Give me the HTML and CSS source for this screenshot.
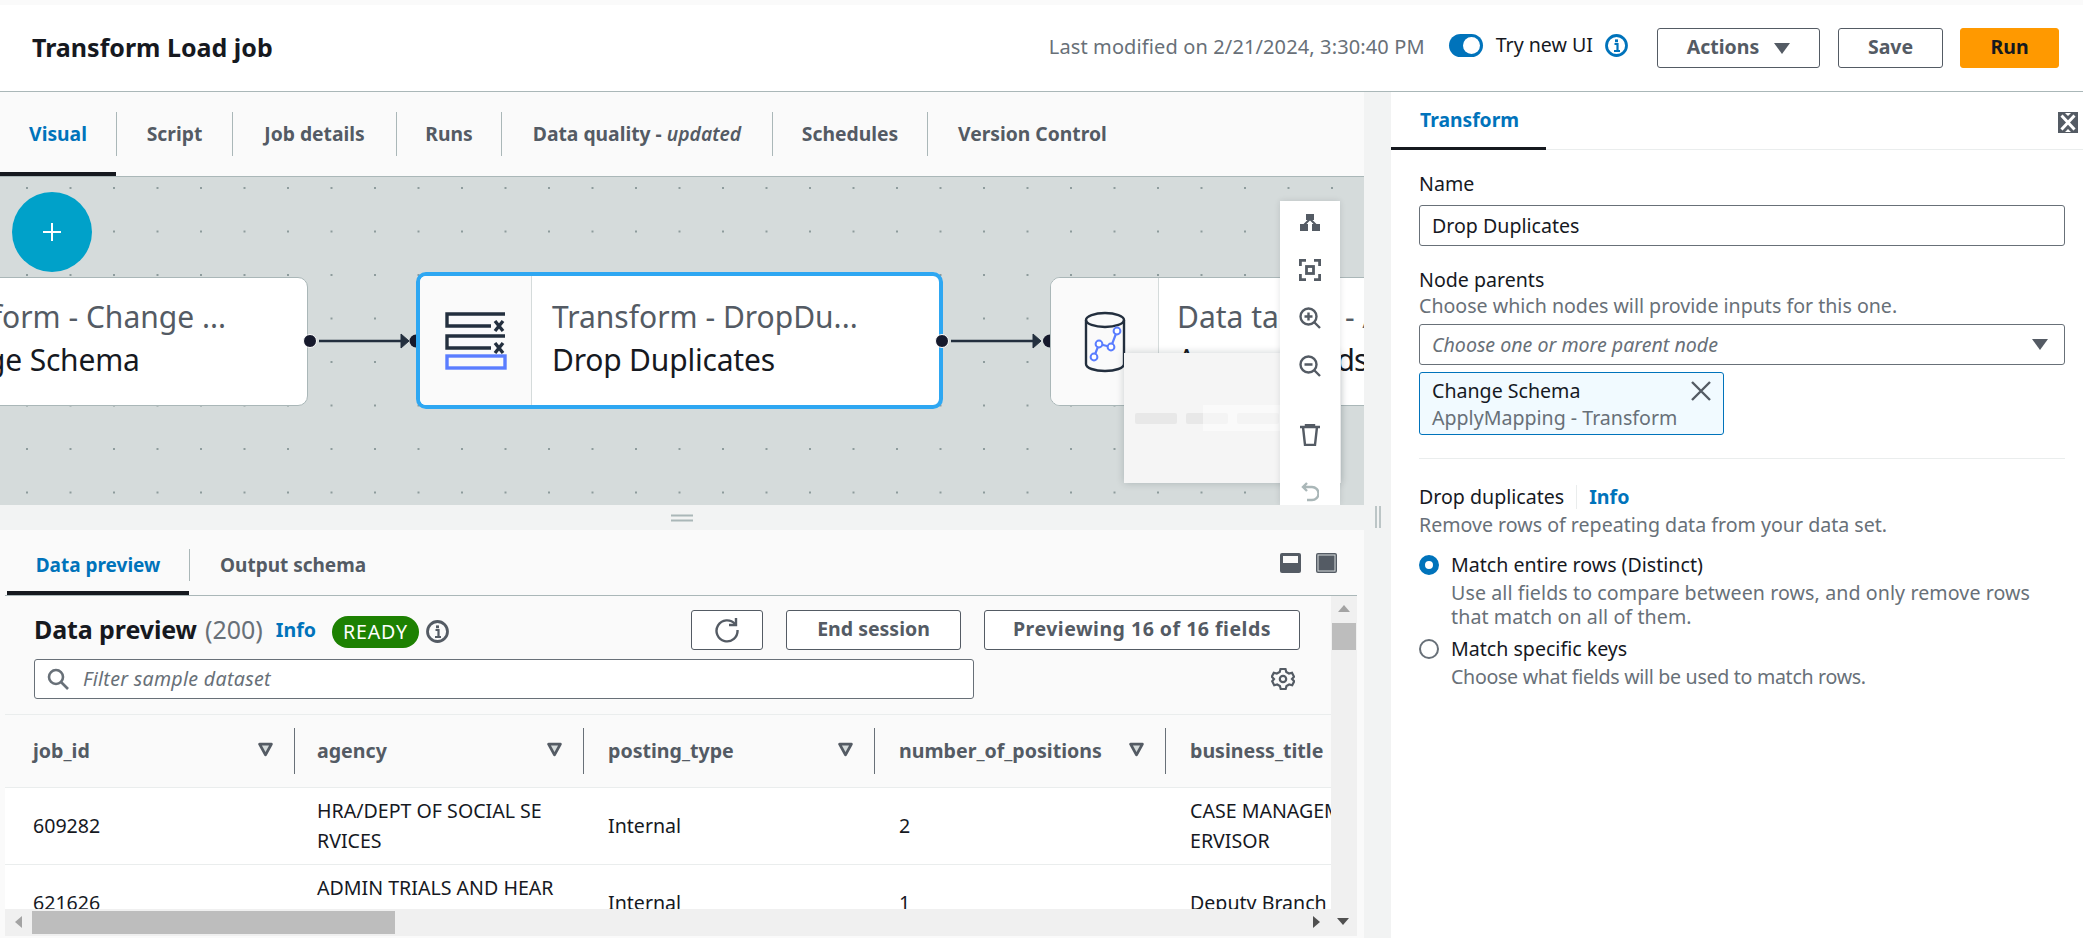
FILE: index.html
```html
<!DOCTYPE html>
<html lang="en">
<head>
    <meta charset="UTF-8">
    <meta name="viewport" content="width=device-width, initial-scale=1.0">
    <title>Transform Load job</title>
    <link rel="stylesheet" href="styles.css">
</head>
<body>
    <svg class="defs" width="0" height="0">
        <symbol id="sort" viewBox="0 0 14 14"><path d="M1.5 2h11L7 12z" fill="#d5dbdb" stroke="#545b64" stroke-width="2.600" stroke-linejoin="round"/></symbol>
        <symbol id="info" viewBox="0 0 23 23"><circle cx="11.5" cy="11.5" r="10" fill="none" stroke="currentColor" stroke-width="2.8"/><path d="M9.500 10h3v7M9 17h6" fill="none" stroke="currentColor" stroke-width="2.200"/><rect x="10" y="5.400" width="3" height="2.800" fill="currentColor"/></symbol>
    </svg>

    <header class="top-bar">
        <h1>Transform Load job</h1>
        <div class="top-actions">
            <span class="modified">Last modified on 2/21/2024, 3:30:40 PM</span>
            <span class="toggle"><span class="knob"></span></span>
            <span class="try-ui">Try new UI</span>
            <svg class="info-ic blue"><use href="#info"/></svg>
            <button class="btn btn-actions">Actions <span class="caret"></span></button>
            <button class="btn btn-save">Save</button>
            <button class="btn btn-run">Run</button>
        </div>
    </header>

    <main class="workspace">
        <section class="left-col">
            <nav class="tabs job-tabs">
                <a class="tab active">Visual</a>
                <a class="tab">Script</a>
                <a class="tab">Job details</a>
                <a class="tab">Runs</a>
                <a class="tab">Data quality - <em>updated</em></a>
                <a class="tab">Schedules</a>
                <a class="tab last">Version Control</a>
            </nav>

            <div class="canvas">
                <button class="add-node"><svg width="22" height="22" viewBox="0 0 22 22"><path d="M11 2v18M2 11h18" stroke="#fff" stroke-width="2"/></svg></button>

                <div class="node node-one">
                    <div class="node-icon"></div>
                    <div class="node-text">
                        <div class="node-type">Transform - Change ...</div>
                        <div class="node-name">Change Schema</div>
                    </div>
                </div>

                <div class="node node-two">
                    <div class="node-icon">
                        <svg width="62" height="58" viewBox="0 0 62 58" fill="none">
                            <path d="M60 2H2v12h44" stroke="#232f3e" stroke-width="3.400"/>
                            <path d="M50 9l8 10M58 9l-8 10" stroke="#232f3e" stroke-width="3.400"/>
                            <path d="M60 24H2v12h44" stroke="#232f3e" stroke-width="3.400"/>
                            <path d="M50 31l8 10M58 31l-8 10" stroke="#232f3e" stroke-width="3.400"/>
                            <rect x="2" y="44" width="58" height="12" stroke="#5a7dff" stroke-width="3.400"/>
                        </svg>
                    </div>
                    <div class="node-text">
                        <div class="node-type">Transform - DropDu...</div>
                        <div class="node-name">Drop Duplicates</div>
                    </div>
                </div>

                <div class="node node-three">
                    <div class="node-icon">
                        <svg width="42" height="62" viewBox="0 0 42 62" fill="none">
                            <ellipse cx="21" cy="9" rx="19" ry="7" stroke="#232f3e" stroke-width="2.400"/>
                            <path d="M2 9v44c0 4 8.500 7 19 7s19-3 19-7V9" stroke="#232f3e" stroke-width="2.400"/>
                            <path d="M10 46l5-13 12 3 6-16" stroke="#5a7dff" stroke-width="2.200"/>
                            <circle cx="10" cy="46" r="3.400" fill="#fff" stroke="#5a7dff" stroke-width="2"/>
                            <circle cx="15" cy="33" r="3.400" fill="#fff" stroke="#5a7dff" stroke-width="2"/>
                            <circle cx="27" cy="36" r="3.400" fill="#fff" stroke="#5a7dff" stroke-width="2"/>
                            <circle cx="33" cy="20" r="3.400" fill="#fff" stroke="#5a7dff" stroke-width="2"/>
                        </svg>
                    </div>
                    <div class="node-text">
                        <div class="node-type">Data target - Amazon S3</div>
                        <div class="node-name">Amazon Fields</div>
                    </div>
                </div>

                <svg class="edges" width="1364" height="328" viewBox="0 0 1364 328">
                    <g fill="#16192c" stroke="#fff" stroke-width="1">
                        <circle cx="310" cy="164" r="6.500"/>
                        <circle cx="942" cy="164" r="6.500"/>
                    </g>
                    <g fill="#16192c">
                        <path d="M416 157.500a6.500 6.500 0 0 0 0 13z"/>
                        <path d="M1050 157.500a7 6.500 0 0 0 0 13z"/>
                    </g>
                    <g fill="#232f3e" stroke="#232f3e">
                        <path d="M319 164h82" stroke-width="2.500"/>
                        <path d="M401 157l8 7-8 7z"/>
                        <path d="M951 164h82" stroke-width="2.500"/>
                        <path d="M1033 157l8 7-8 7z"/>
                    </g>
                </svg>

                <div class="loading-pop">
                    <span class="bone"></span><span class="bone"></span><span class="bone"></span>
                    <span class="shimmer"></span>
                </div>

                <div class="canvas-tools">
                    <svg class="tool-first" width="20" height="17" viewBox="0 0 20 17"><path d="M6 0h8v6H6zM0 10h8v7H0zM12 10h8v7h-8z" fill="#545b64"/><path d="M10 5L4 11M10 5l6 6" stroke="#545b64" stroke-width="2"/></svg>
                    <svg width="22" height="22" viewBox="0 0 22 22" fill="none" stroke="#545b64" stroke-width="2.800"><path d="M1.400 7V1.400H7M15 1.400h5.600V7M20.600 15v5.600H15M7 20.600H1.400V15"/><rect x="7.500" y="7.500" width="7" height="7"/></svg>
                    <svg width="22" height="22" viewBox="0 0 22 22" fill="none" stroke="#545b64" stroke-width="2.400"><circle cx="9.500" cy="9.500" r="8"/><path d="M15 15l6 6M5.500 9.500h8M9.500 5.500v8"/></svg>
                    <svg width="22" height="22" viewBox="0 0 22 22" fill="none" stroke="#545b64" stroke-width="2.400"><circle cx="9.500" cy="9.500" r="8"/><path d="M15 15l6 6M5.500 9.500h8"/></svg>
                    <svg class="tool-gap" width="20" height="22" viewBox="0 0 20 22" fill="none" stroke="#545b64" stroke-width="2.400"><path d="M0 3h20M3 3l2 18h10l2-18M6 3V1h8v2"/></svg>
                    <svg width="18" height="20" viewBox="0 0 18 20" fill="none" stroke="#aab7b8" stroke-width="2.400"><path d="M6 1L2 5l4 4M2 5h9a6 6 0 0 1 0 13H6"/></svg>
                </div>
            </div>

            <div class="drag-bar">
                <svg width="22" height="8" viewBox="0 0 22 8"><path d="M0 1.500h22M0 6.500h22" stroke="#aab7b8" stroke-width="2"/></svg>
            </div>

            <section class="preview">
                <div class="tabs preview-tabs">
                    <a class="tab active">Data preview</a>
                    <a class="tab last">Output schema</a>
                    <div class="split-icons">
                        <svg width="21" height="20" viewBox="0 0 21 20"><rect width="21" height="20" rx="2" fill="#545b64"/><rect x="3" y="3" width="15" height="7" fill="#fafafa"/></svg>
                        <svg width="21" height="20" viewBox="0 0 21 20"><rect width="21" height="20" rx="2" fill="#545b64"/><rect x="2" y="2" width="17" height="16" fill="none" stroke="#d5dbdb"/></svg>
                    </div>
                </div>

                <div class="preview-body">
                    <div class="preview-main">
                        <div class="preview-head">
                            <h2>Data preview</h2>
                            <span class="count">(200)</span>
                            <a class="info-link">Info</a>
                            <span class="pill">READY</span>
                            <svg class="info-ic grey"><use href="#info"/></svg>
                            <div class="head-buttons">
                                <button class="btn btn-refresh"><svg width="26" height="26" viewBox="0 0 26 26" fill="none" stroke="#545b64" stroke-width="2.400"><path d="M21 7a10.500 10.500 0 1 0 2.500 6"/><path d="M22 1v7h-7"/></svg></button>
                                <button class="btn btn-end">End session</button>
                                <button class="btn btn-fields">Previewing 16 of 16 fields</button>
                            </div>
                        </div>
                        <div class="filter-row">
                            <div class="filter-input">
                                <svg width="22" height="22" viewBox="0 0 22 22" fill="none" stroke="#687078" stroke-width="2.600"><circle cx="9" cy="9" r="7"/><path d="M14 14l7 7"/></svg>
                                <span>Filter sample dataset</span>
                            </div>
                            <svg class="gear" width="24" height="24" viewBox="0 0 24 24" fill="none" stroke="#545b64" stroke-width="2.200"><path d="M9.500 2h5l.8 3 2.700 1.500 3-.8 2 4L21 12l2.200 2.300-2 4-3-.8-2.700 1.500-.8 3h-5l-.8-3-2.700-1.500-3 .8-2-4L3 12 .8 9.700l2-4 3 .8L8.700 5z"/><circle cx="12" cy="12" r="3.200"/></svg>
                        </div>

                        <div class="table-wrap">
                            <table class="data-table">
                                <thead>
                                    <tr>
                                        <th><div class="th-in"><span>job_id</span><svg><use href="#sort"/></svg></div></th>
                                        <th><div class="th-in"><span>agency</span><svg><use href="#sort"/></svg></div></th>
                                        <th><div class="th-in"><span>posting_type</span><svg><use href="#sort"/></svg></div></th>
                                        <th><div class="th-in"><span>number_of_positions</span><svg><use href="#sort"/></svg></div></th>
                                        <th><div class="th-in"><span>business_title</span></div></th>
                                    </tr>
                                </thead>
                                <tbody>
                                    <tr>
                                        <td>609282</td>
                                        <td>HRA/DEPT OF SOCIAL SE<br>RVICES</td>
                                        <td>Internal</td>
                                        <td>2</td>
                                        <td>CASE MANAGEMENT SUP<br>ERVISOR</td>
                                    </tr>
                                    <tr>
                                        <td>621626</td>
                                        <td>ADMIN TRIALS AND HEAR<br>INGS</td>
                                        <td>Internal</td>
                                        <td>1</td>
                                        <td>Deputy Branch</td>
                                    </tr>
                                </tbody>
                            </table>
                        </div>
                    </div>
                    <div class="v-scroll">
                        <span class="arrow up"></span>
                        <span class="v-thumb"></span>
                    </div>
                </div>

                <div class="h-scroll">
                    <span class="arrow left"></span>
                    <span class="h-thumb"></span>
                    <span class="arrow right"></span>
                    <span class="arrow down"></span>
                </div>
            </section>
        </section>

        <div class="side-gutter">
            <svg width="6" height="22" viewBox="0 0 6 22"><path d="M1 0v22M5 0v22" stroke="#aab7b8" stroke-width="1.500"/></svg>
        </div>

        <aside class="side-panel">
            <div class="side-tabs">
                <a class="side-tab">Transform</a>
                <svg class="expand" width="20" height="21" viewBox="0 0 20 21"><path d="M0 0h20v21H0z" fill="#545b64"/><path d="M3 3l14 15M17 3L3 18" stroke="#fff" stroke-width="3"/><path d="M0 0h7L0 7zM20 0h-7l7 7zM0 21h7l-7-7zM20 21h-7l7-7z" fill="#545b64"/><path d="M7 1h6l-3 3zM7 20h6l-3-3z" fill="#fff"/></svg>
            </div>
            <div class="side-body">
                <label class="field-label first">Name</label>
                <div class="text-input">Drop Duplicates</div>

                <label class="field-label">Node parents</label>
                <p class="hint">Choose which nodes will provide inputs for this one.</p>
                <div class="text-input select"><i>Choose one or more parent node</i><span class="caret"></span></div>
                <div class="token">
                    <div class="token-head">
                        <span>Change Schema</span>
                        <svg width="20" height="20" viewBox="0 0 20 20"><path d="M1 1l18 18M19 1L1 19" stroke="#545b64" stroke-width="2.400"/></svg>
                    </div>
                    <div class="token-sub">ApplyMapping - Transform</div>
                </div>

                <hr class="divider">

                <div class="group-label"><span>Drop duplicates</span><a class="info-link">Info</a></div>
                <p class="hint hint-group">Remove rows of repeating data from your data set.</p>

                <div class="radio-row checked">
                    <span class="radio"></span>
                    <div>
                        <div class="radio-label">Match entire rows (Distinct)</div>
                        <div class="radio-desc spaced">Use all fields to compare between rows, and only remove rows that match on all of them.</div>
                    </div>
                </div>
                <div class="radio-row">
                    <span class="radio"></span>
                    <div>
                        <div class="radio-label">Match specific keys</div>
                        <div class="radio-desc">Choose what fields will be used to match rows.</div>
                    </div>
                </div>
            </div>
        </aside>
    </main>
</body>
</html>
```
FILE: styles.css
```css
* {
    box-sizing: border-box;
}

body {
    margin: 0;
    width: 2083px;
    height: 938px;
    overflow: hidden;
    padding-top: 5px;
    background-color: #fafafa;
    color: #16191f;
    font-family: "Noto Sans", Arial, sans-serif;
    font-size: 19.6px;
    line-height: 24px;
}

.defs {
    position: absolute;
}

button {
    font-family: inherit;
}

/* top bar */
.top-bar {
    display: flex;
    justify-content: space-between;
    align-items: center;
    height: 87px;
    padding: 0 24px 0 32px;
    background-color: #fff;
    border-bottom: 1px solid #aab7b8;
}

h1 {
    margin: 0 0 2px;
    font-size: 25px;
    font-weight: 700;
}

.top-actions {
    display: flex;
    align-items: center;
}

.modified {
    margin: -2px 24px 0 0;
    color: #687078;
    font-size: 20px;
    letter-spacing: 0.12px;
}

.toggle {
    display: flex;
    justify-content: flex-end;
    align-items: center;
    width: 34px;
    height: 23px;
    margin: -6px 13px 0 0;
    padding-right: 3px;
    border-radius: 12px;
    background-color: #0073bb;
}

.knob {
    width: 17px;
    height: 17px;
    border-radius: 50%;
    background-color: #fff;
}

.try-ui {
    margin: -7px 12px 0 0;
}

.info-ic {
    width: 23px;
    height: 23px;
}

.info-ic.blue {
    margin: -6px 29px 0 0;
    color: #0073bb;
}

.info-ic.grey {
    color: #545b64;
}

.btn {
    height: 40px;
    padding: 0 0 3px;
    background-color: #fff;
    border: 1px solid #545b64;
    border-radius: 3px;
    color: #545b64;
    font-size: 19.5px;
    font-weight: 700;
}

.btn-actions {
    width: 163px;
    margin-right: 18px;
}

.caret {
    display: inline-block;
    width: 0;
    height: 0;
    border-left: 8px solid transparent;
    border-right: 8px solid transparent;
    border-top: 11px solid #545b64;
}

.btn-actions .caret {
    margin-left: 10px;
}

.btn-save {
    width: 105px;
    margin-right: 17px;
}

.btn-run {
    width: 99px;
    background-color: #ff9900;
    border-color: #ff9900;
    color: #16191f;
}

/* layout */
.workspace {
    display: flex;
    height: 846px;
}

.left-col {
    display: flex;
    flex-direction: column;
    width: 1364px;
}

.side-gutter {
    display: flex;
    justify-content: center;
    width: 27px;
    padding-top: 414px;
    background-color: #f2f3f3;
}

.side-panel {
    flex: 1;
    background-color: #fff;
}

/* tabs */
.tabs {
    background-color: #fafafa;
    border-bottom: 1px solid #aab7b8;
}

.job-tabs {
    display: grid;
    grid-template-columns: 117px 116px 164px 105px 271px 155px auto;
    align-items: center;
    height: 85px;
}

.tab {
    position: relative;
    display: flex;
    align-items: center;
    justify-content: center;
    height: 44px;
    border-right: 1px solid #aab7b8;
    color: #545b64;
    font-size: 19.3px;
    font-weight: 700;
    white-space: pre;
}

.tab.last {
    justify-content: flex-start;
    padding-left: 30px;
    border-right: none;
}

.tab.active {
    color: #0073bb;
}

.tab.active::after {
    content: "";
    position: absolute;
    left: 0;
    right: 0;
    bottom: -20px;
    height: 4px;
    background-color: #16191f;
}

.tab em {
    font-weight: 600;
}

/* canvas */
.canvas {
    position: relative;
    height: 328px;
    overflow: hidden;
    background-color: #d5dbdb;
    background-image: radial-gradient(circle, #8d9b9c 0.8px, transparent 1.2px);
    background-size: 43.5px 43.5px;
    background-position: 5.25px -10.75px;
}

.add-node {
    position: absolute;
    left: 12px;
    top: 15px;
    display: flex;
    justify-content: center;
    align-items: center;
    width: 80px;
    height: 80px;
    padding: 0;
    border: none;
    border-radius: 50%;
    background-color: #00a1c9;
}

.node {
    position: absolute;
    display: flex;
    top: 100px;
    height: 129px;
    width: 525px;
    background-color: #fff;
    border: 1px solid #aab7b8;
    border-radius: 10px;
    overflow: hidden;
}

.node-one {
    left: -217px;
}

.node-two {
    left: 416px;
    top: 95px;
    width: 527px;
    height: 137px;
    border: 4px solid #2ea7f2;
}

.node-three {
    left: 1050px;
    width: 600px;
}

.node-icon {
    display: flex;
    flex: none;
    justify-content: center;
    align-items: center;
    width: 112px;
    background-color: #fafafa;
    border-right: 1px solid #d5dbdb;
}

.node-three .node-icon {
    width: 108px;
}

.node-text {
    padding: 17px 0 0 19px;
    font-size: 30px;
    line-height: 43px;
    white-space: nowrap;
}

.node-two .node-text {
    padding: 19px 0 0 20px;
}

.node-three .node-text {
    padding-left: 18px;
}

.node-three .node-name {
    letter-spacing: -1px;
}

.node-type {
    color: #545b64;
}

.node-name {
    letter-spacing: -0.2px;
}

.edges {
    position: absolute;
    left: 0;
    top: 0;
}

.loading-pop {
    position: absolute;
    left: 1124px;
    top: 176px;
    display: flex;
    gap: 9px;
    width: 217px;
    height: 130px;
    padding: 60px 0 0 11px;
    background-color: #f5f5f5;
    box-shadow: 0 0 8px rgba(0, 28, 36, 0.2);
}

.bone {
    width: 42px;
    height: 11px;
    border-radius: 2px;
    background-color: #e8e8e8;
}

.shimmer {
    position: absolute;
    left: 79px;
    top: 52px;
    width: 77px;
    height: 26px;
    background-color: rgba(255, 255, 255, 0.5);
}

.canvas-tools {
    position: absolute;
    left: 1280px;
    top: 24px;
    display: flex;
    flex-direction: column;
    align-items: center;
    gap: 26px;
    width: 60px;
    height: 304px;
    padding-top: 13px;
    background-color: #fff;
    box-shadow: 0 0 6px rgba(0, 28, 36, 0.12);
}

.canvas-tools .tool-first {
    margin-bottom: 2px;
}

.canvas-tools .tool-gap {
    margin: 21px 0 10px;
}

.drag-bar {
    display: flex;
    justify-content: center;
    align-items: center;
    height: 25px;
    background-color: #f2f3f3;
}

/* data preview */
.preview {
    display: flex;
    flex: 1;
    flex-direction: column;
    padding-left: 5px;
    padding-right: 7px;
    background-color: #fafafa;
}

.preview-tabs {
    display: flex;
    flex: none;
    align-items: center;
    height: 66px;
    padding: 5px 0 0 2px;
}

.preview-tabs .tab {
    height: 32px;
    font-size: 19px;
}

.preview-tabs .tab.active {
    width: 183px;
}

.preview-tabs .tab.last {
    padding-left: 30px;
}

.preview-tabs .tab.active::after {
    bottom: -14px;
}

.split-icons {
    display: flex;
    gap: 15px;
    margin: -5px 20px 0 auto;
}

.preview-body {
    display: flex;
    flex: 1;
    min-height: 0;
}

.preview-main {
    flex: 1;
    min-width: 0;
}

.preview-head {
    display: flex;
    align-items: center;
    height: 39px;
    margin-top: 14px;
    padding-left: 29px;
}

h2 {
    margin: 0 8px 2px 0;
    font-size: 25px;
    font-weight: 700;
    letter-spacing: -0.1px;
}

.count {
    margin: 0 13px 2px 0;
    color: #687078;
    font-size: 25px;
}

.info-link {
    color: #0073bb;
    font-weight: 700;
}

.pill {
    height: 32px;
    margin: 4px 7px 0 16px;
    padding: 0 11px;
    border-radius: 16px;
    background-color: #1d8102;
    color: #fff;
    letter-spacing: 0.8px;
    line-height: 32px;
}

.preview-head .info-ic {
    margin-top: 4px;
}

.head-buttons {
    display: flex;
    gap: 23px;
    margin-left: auto;
    margin-right: 31px;
}

.btn-refresh {
    display: flex;
    justify-content: center;
    align-items: center;
    width: 72px;
    padding: 0;
}

.btn-end {
    width: 175px;
}

.btn-fields {
    width: 316px;
    letter-spacing: 0.5px;
}

.filter-row {
    display: flex;
    align-items: center;
    justify-content: space-between;
    height: 40px;
    margin-top: 10px;
    padding: 0 36px 0 29px;
}

.filter-input {
    display: flex;
    align-items: center;
    gap: 14px;
    width: 940px;
    height: 40px;
    padding-left: 12px;
    background-color: #fff;
    border: 1px solid #687078;
    border-radius: 3px;
    color: #687078;
    font-style: italic;
    letter-spacing: 0.3px;
}

.table-wrap {
    height: 195px;
    margin-top: 15px;
    overflow: hidden;
    border-top: 1px solid #eaeded;
}

.data-table {
    width: 1452px;
    table-layout: fixed;
    border-collapse: collapse;
}

.data-table th {
    width: 291px;
    height: 72px;
    padding: 0;
    font-weight: 700;
    text-align: left;
}

.data-table th:first-child {
    width: 290px;
}

.data-table th:nth-child(2) {
    width: 289px;
}

.th-in {
    display: flex;
    justify-content: space-between;
    align-items: center;
    height: 46px;
    margin-top: 1px;
    padding: 0 21px 0 24px;
    border-right: 1px solid #687078;
    color: #545b64;
}

th:first-child .th-in {
    padding-left: 28px;
}

th:nth-child(2) .th-in {
    padding-left: 22px;
}

th:last-child .th-in {
    border-right: none;
}

.th-in svg {
    width: 15px;
    height: 15px;
    margin-bottom: 4px;
}

.data-table td {
    padding: 8px 0 8px 24px;
    background-color: #fff;
    border-top: 1px solid #eaeded;
    line-height: 30px;
    white-space: nowrap;
}

.data-table td:first-child {
    padding-left: 28px;
}

.data-table td:nth-child(2) {
    padding-left: 22px;
}

/* scrollbars */
.v-scroll {
    position: relative;
    flex: none;
    width: 26px;
    background-color: #f0f0f0;
}

.v-thumb {
    position: absolute;
    left: 1px;
    top: 27px;
    width: 24px;
    height: 27px;
    background-color: #bdbdbd;
}

.h-scroll {
    position: relative;
    flex: none;
    height: 27px;
    margin-bottom: 2px;
    background-color: #f0f0f0;
}

.h-thumb {
    position: absolute;
    left: 27px;
    top: 2px;
    width: 363px;
    height: 23px;
    background-color: #bdbdbd;
}

.arrow {
    position: absolute;
    width: 0;
    height: 0;
    border: 6px solid transparent;
}

.arrow.up {
    left: 7px;
    top: 9px;
    border-top: none;
    border-bottom: 7px solid #a3a3a3;
}

.arrow.down {
    left: 1332px;
    top: 9px;
    border-bottom: none;
    border-top: 7px solid #505050;
}

.arrow.left {
    left: 10px;
    top: 7px;
    border-left: none;
    border-right: 7px solid #a3a3a3;
}

.arrow.right {
    left: 1308px;
    top: 7px;
    border-right: none;
    border-left: 7px solid #505050;
}

/* side panel */
.side-tabs {
    display: flex;
    justify-content: space-between;
    height: 58px;
    border-bottom: 1px solid #eaeded;
}

.side-tab {
    width: 155px;
    height: 58px;
    padding: 16px 0 0 29px;
    border-bottom: 3px solid #16191f;
    color: #0073bb;
    font-size: 19.3px;
    font-weight: 700;
}

.expand {
    margin: 20px 5px 0 0;
}

.side-body {
    padding: 0 18px 0 28px;
}

.field-label {
    display: block;
    margin-top: 22px;
}

.text-input {
    display: flex;
    justify-content: space-between;
    align-items: center;
    height: 41px;
    margin-top: 9px;
    padding: 0 12px;
    border: 1px solid #687078;
    border-radius: 3px;
}

.text-input i {
    color: #687078;
}

.text-input.select {
    margin-top: 6px;
}

.text-input .caret {
    margin-right: 4px;
}

.hint {
    margin: 2px 0 0;
    color: #687078;
}

.token {
    width: 305px;
    height: 63px;
    margin-top: 7px;
    padding: 5px 12px 0;
    background-color: #f1faff;
    border: 1px solid #0073bb;
    border-radius: 3px;
}

.token-head {
    display: flex;
    justify-content: space-between;
    align-items: center;
    height: 26px;
}

.token-sub {
    margin-top: 2px;
    color: #687078;
}

.divider {
    height: 1px;
    margin: 23px 0 0;
    background-color: #eaeded;
    border: none;
}

.group-label {
    display: flex;
    align-items: center;
    margin-top: 26px;
}

.group-label .info-link {
    margin-left: 12px;
    padding-left: 12px;
    border-left: 1px solid #eaeded;
}

.hint-group {
    margin-top: 4px;
}

.radio-row {
    display: flex;
    gap: 12px;
    margin-top: 8px;
}

.hint-group + .radio-row {
    margin-top: 16px;
}

.radio {
    flex: none;
    width: 20px;
    height: 20px;
    margin-top: 2px;
    border: 2px solid #687078;
    border-radius: 50%;
}

.checked .radio {
    border: 6px solid #0073bb;
}

.radio-desc {
    margin-top: 4px;
    color: #687078;
    letter-spacing: -0.3px;
}

.radio-desc.spaced {
    letter-spacing: 0.1px;
}
```
